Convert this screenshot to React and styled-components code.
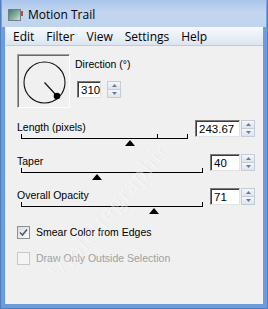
import styled, { createGlobalStyle } from "styled-components";

const GlobalStyle = createGlobalStyle`
  html, body { margin: 0; padding: 0; background: #6b9bd8; }
  * { box-sizing: border-box; }
`;

const sliders = [
  { label: "Length (pixels)", value: "243.67", thumb: 108, tick: 135, wide: true },
  { label: "Taper", value: "40", thumb: 75 },
  { label: "Overall Opacity", value: "71", thumb: 132 },
];

function App() {
  return (
    <>
      <GlobalStyle />
      <Frame>
        <TitleBar>
          <AppIcon>
            <span />
          </AppIcon>
          <Title>Motion Trail</Title>
        </TitleBar>
        <Client>
          <MenuBar>
            <MenuItem>Edit</MenuItem>
            <MenuItem>Filter</MenuItem>
            <MenuItem>View</MenuItem>
            <MenuItem>Settings</MenuItem>
            <MenuItem>Help</MenuItem>
          </MenuBar>
          <Content>
            <DirectionRow>
              <Dial>
                <svg width="51" height="52" viewBox="0 0 51 52">
                  <circle cx="26.5" cy="27.5" r="20.5" fill="none" stroke="#111" strokeWidth="1.1" />
                  <line x1="26.5" y1="27.5" x2="39" y2="41" stroke="#111" strokeWidth="1.2" />
                  <circle cx="39" cy="41" r="3.3" fill="#000" />
                </svg>
              </Dial>
              <DirectionColumn>
                <Label>Direction (°)</Label>
                <DirectionInput>
                  <NumberBox $width={24}>310</NumberBox>
                  <Spin />
                </DirectionInput>
              </DirectionColumn>
            </DirectionRow>

            {sliders.map((s) => (
              <SliderRow key={s.label}>
                <SliderColumn>
                  <Label>{s.label}</Label>
                  <Track>
                    {s.tick && <Tick style={{ left: s.tick }} />}
                    <Thumb style={{ left: s.thumb }} />
                  </Track>
                </SliderColumn>
                <SliderInput>
                  <NumberBox $width={s.wide ? 45 : 30}>{s.value}</NumberBox>
                  <Spin />
                </SliderInput>
              </SliderRow>
            ))}

            <CheckList>
              <CheckRow>
                <CheckBox>
                  <svg width="9" height="9" viewBox="0 0 9 9">
                    <path d="M1 4.5 L3.5 7 L8 1.5" fill="none" stroke="#4a5a86" strokeWidth="1.6" />
                  </svg>
                </CheckBox>
                <CheckText>Smear Color from Edges</CheckText>
              </CheckRow>
              <CheckRow>
                <CheckBox $disabled />
                <CheckText $disabled>Draw Only Outside Selection</CheckText>
              </CheckRow>
            </CheckList>

            <Watermark>Violettegraphic</Watermark>
          </Content>
        </Client>
      </Frame>
    </>
  );
}

function Spin() {
  return (
    <SpinBox>
      <SpinHalf>
        <svg width="5" height="3" viewBox="0 0 5 3">
          <path d="M0 3 L2.5 0 L5 3 Z" fill="#6b7a90" />
        </svg>
      </SpinHalf>
      <SpinHalf>
        <svg width="5" height="3" viewBox="0 0 5 3">
          <path d="M0 0 L2.5 3 L5 0 Z" fill="#6b7a90" />
        </svg>
      </SpinHalf>
    </SpinBox>
  );
}

export default App;

// window frame
const Frame = styled.div`
  width: 268px;
  height: 309px;
  display: flex;
  flex-direction: column;
  background: linear-gradient(#7fa8de, #6b9bd8 40px, #6b9bd8);
  padding: 0 4px 4px 4px;
  border: 1px solid #4f7fc0;
  border-top: none;
`;

const TitleBar = styled.div`
  height: 27px;
  margin: 0 -3px;
  padding: 0 0 0 6px;
  display: flex;
  align-items: center;
  gap: 7px;
  background: linear-gradient(180deg, #a9c5eb 0%, #c3d6ef 45%, #c0d4ee 100%);
`;

const AppIcon = styled.div`
  width: 13px;
  height: 12px;
  border: 1px solid #6e7f86;
  background: linear-gradient(135deg, #3f7c6b, #8fb3a6 60%, #d8e0e0);
  position: relative;
  margin-top: 2px;

  span {
    position: absolute;
    right: -3px;
    top: 1px;
    width: 2px;
    height: 5px;
    background: #d04040;
  }
`;

const Title = styled.span`
  font-family: "Open Sans", "Noto Sans", sans-serif;
  font-size: 12px;
  color: #000;
  margin-top: 2px;
`;

const Client = styled.div`
  flex: 1;
  display: flex;
  flex-direction: column;
  background: #f0f0f0;
  border-left: 1px solid #dbe6f4;
`;

// menu
const MenuBar = styled.div`
  height: 19px;
  display: flex;
  align-items: center;
  padding-left: 1px;
  background: linear-gradient(180deg, #f6f9fd 0%, #eaf0f8 50%, #dbe4f1 100%);
  border-bottom: 1px solid #c3cad6;
`;

const MenuItem = styled.span`
  font-family: "Open Sans", "Noto Sans", sans-serif;
  font-size: 12px;
  color: #000;
  padding: 0 6px;
`;

// main panel
const Content = styled.div`
  position: relative;
  overflow: hidden;
  flex: 1;
  padding: 8px 8px 0 11px;
  display: flex;
  flex-direction: column;
  font-family: "Liberation Sans", Arial, sans-serif;
  font-size: 10.5px;
`;

const DirectionRow = styled.div`
  display: flex;
  gap: 5px;
  margin-bottom: 13px;
`;

const Dial = styled.div`
  width: 53px;
  height: 54px;
  border: 1px solid;
  border-color: #a0a0a0 #ffffff #ffffff #a0a0a0;
  box-shadow: inset 1px 1px 0 #696969;
  background: #f0f0f0;
  display: flex;
  align-items: center;
  justify-content: center;
`;

const DirectionColumn = styled.div`
  display: flex;
  flex-direction: column;
  gap: 10px;
  padding-top: 4px;
`;

const Label = styled.div`
  line-height: 13px;
  height: 13px;
  color: #000;
  white-space: nowrap;
`;

const InputRow = styled.div`
  display: flex;
  gap: 1px;
  align-items: flex-start;
`;

const DirectionInput = styled(InputRow)`
  margin-left: 2px;
  gap: 6px;
`;

const SliderInput = styled(InputRow)`
  margin-top: -1px;
`;

const NumberBox = styled.div`
  width: ${(p) => p.$width}px;
  flex-shrink: 0;
  height: 17px;
  background: #fff;
  border: 1px solid;
  border-color: #7a7a7a #e3e3e3 #e3e3e3 #7a7a7a;
  box-shadow: inset 1px 1px 0 #3c3c3c;
  padding: 1px 0 0 3px;
  font-size: 11.5px;
  line-height: 15px;
  color: #000;
`;

const SpinBox = styled.div`
  width: 14px;
  height: 17px;
  display: flex;
  flex-direction: column;
  border: 1px solid #c4ccd8;
  background: #e9edf3;
`;

const SpinHalf = styled.div`
  flex: 1;
  display: flex;
  align-items: center;
  justify-content: center;
  background: linear-gradient(#f4f6f9, #dfe4ec);
  & + & {
    border-top: 1px solid #c4ccd8;
  }
`;

// sliders
const SliderRow = styled.div`
  display: flex;
  gap: 7px;
  height: 34px;
  align-items: flex-start;
`;

const SliderColumn = styled.div`
  flex: 1;
  display: flex;
  flex-direction: column;
`;

const Track = styled.div`
  position: relative;
  margin-left: 4px;
  height: 5px;
  border: 1px solid #000;
  border-top: none;
`;

const Tick = styled.div`
  position: absolute;
  top: 0;
  width: 1px;
  height: 4px;
  background: #000;
`;

const Thumb = styled.div`
  position: absolute;
  top: 6px;
  margin-left: -5px;
  width: 0;
  height: 0;
  border-left: 5px solid transparent;
  border-right: 5px solid transparent;
  border-bottom: 6px solid #000;
`;

// checkboxes
const CheckList = styled.div`
  display: flex;
  flex-direction: column;
  gap: 13px;
  margin-top: 3px;
`;

const CheckRow = styled.div`
  display: flex;
  align-items: center;
  gap: 6px;
`;

const CheckBox = styled.div`
  width: 13px;
  height: 13px;
  border: 1px solid ${(p) => (p.$disabled ? "#c8c8c8" : "#8e8f8f")};
  background: ${(p) => (p.$disabled ? "#f4f4f4" : "linear-gradient(135deg, #dcdcdc, #fbfbfb)")};
  display: flex;
  align-items: center;
  justify-content: center;
`;

const CheckText = styled.span`
  font-size: 10.5px;
  line-height: 13px;
  color: ${(p) => (p.$disabled ? "#a0a0a0" : "#000")};
`;

const Watermark = styled.div`
  position: absolute;
  left: 36px;
  top: 222px;
  transform: rotate(-50deg);
  transform-origin: left top;
  font-family: "Liberation Serif", serif;
  font-size: 26px;
  letter-spacing: 1px;
  color: rgba(255, 255, 255, 0.4);
  text-shadow: 1px 1px 0 rgba(0, 0, 0, 0.04);
  pointer-events: none;
  white-space: nowrap;
`;
